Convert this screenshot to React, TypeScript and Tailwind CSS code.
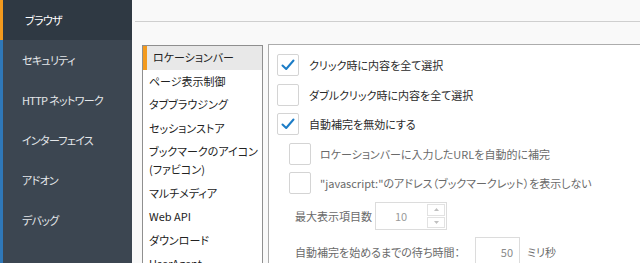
import React from 'react';

const jp = { fontFamily: '"Noto Sans CJK JP", "Noto Sans", sans-serif' };

const sideItems = ['ブラウザ', 'セキュリティ', 'HTTP ネットワーク', 'インターフェイス', 'アドオン', 'デバッグ'];

const listItems = [
  'ロケーションバー',
  'ページ表示制御',
  'タブブラウジング',
  'セッションストア',
  'ブックマークのアイコン\n(ファビコン)',
  'マルチメディア',
  'Web API',
  'ダウンロード',
  'UserAgent',
];

function Check({ checked }: { checked?: boolean }) {
  return (
    <div className="w-[22px] h-[22px] shrink-0 border border-[#d4d4d4] rounded-[2px] bg-white flex items-center justify-center">
      {checked && (
        <svg width="14" height="12" viewBox="0 0 14 12" fill="none">
          <path d="M1.5 6.5 L5.2 10 L12.5 1.5" stroke="#1c7cc6" strokeWidth="2" strokeLinecap="round" strokeLinejoin="round" />
        </svg>
      )}
    </div>
  );
}

export default function App() {
  return (
    <div
      className="flex w-[640px] h-[263px] overflow-hidden bg-[#f9f9f9] text-[11px] [font-feature-settings:'palt']"
      style={jp}
    >
      {/* Sidebar */}
      <div className="w-[132px] shrink-0 bg-[#3c4651] border-l-[3px] border-[#2f78b8] flex flex-col text-[11px] tracking-[-0.7px]">
        {sideItems.map((s, i) => (
          <div
            key={s}
            className={`h-10 flex items-center pl-[19px] shrink-0 whitespace-nowrap ${
              i === 0 ? 'bg-[#2f3943] text-white -ml-[3px] pl-[22px] border-l-[3px] border-[#f39a1e]' : 'text-[#e4e7ea]'
            }`}
          >
            {s}
          </div>
        ))}
      </div>

      {/* Main */}
      <div className="flex-1 flex flex-col min-w-0">
        <div className="h-[22px] shrink-0 ml-[3px] border-b border-[#cfcfcf]" />
        <div className="flex flex-1 pt-[22px] pl-[10px] gap-[5px] min-h-0">
          {/* List */}
          <div className="w-[121px] shrink-0 mt-[1px] bg-white border border-[#8f8f8f] border-b-0 text-[#222] overflow-hidden text-[11px]">
            {listItems.map((s, i) => (
              <div
                key={s}
                className={`py-[3px] pl-[6px] leading-[17.6px] whitespace-pre ${
                  i === 0 ? 'bg-[#e8e8e8] border-l-[4px] border-[#f39a1e] pl-[2px]' : ''
                }`}
              >
                {s}
              </div>
            ))}
          </div>

          {/* Settings panel */}
          <div className="flex-1 bg-white border border-[#acacac] border-r-0 border-b-0 pt-[9px] pl-[8px] text-[#2a2a2a] text-[11px]">
            <div className="flex flex-col">
              <div className="h-[30px] flex items-start gap-[10px]">
                <Check checked />
                <span className="leading-[22px]">クリック時に内容を全て選択</span>
              </div>
              <div className="h-[29px] flex items-start gap-[10px]">
                <Check />
                <span className="leading-[22px]">ダブルクリック時に内容を全て選択</span>
              </div>
              <div className="h-[30px] flex items-start gap-[10px]">
                <Check checked />
                <span className="leading-[22px]">自動補完を無効にする</span>
              </div>
              <div className="h-[29px] flex items-start gap-[9px] pl-[12px] text-[#6a6a6a]">
                <Check />
                <span className="leading-[22px] whitespace-nowrap">ロケーションバーに入力したURLを自動的に補完</span>
              </div>
              <div className="h-[27px] flex items-start gap-[9px] pl-[12px] text-[#6a6a6a]">
                <Check />
                <span className="leading-[22px] whitespace-nowrap">"javascript:"のアドレス（ブックマークレット）を表示しない</span>
              </div>
              <div className="h-[34px] flex items-center pl-[18px] text-[#6a6a6a]">
                <span className="w-[80px] whitespace-nowrap">最大表示項目数</span>
                <div className="w-[72px] h-[28px] border border-[#dcdcdc] flex">
                  <div className="flex-1 flex items-center justify-center text-[#9a9a9a]">10</div>
                  <div className="w-[20px] flex flex-col">
                    <div className="flex-1 border border-[#e2e2e2] m-[1px] mb-0 flex items-center justify-center">
                      <svg width="5" height="3" viewBox="0 0 5 3"><path d="M0 3 L2.5 0 L5 3Z" fill="#c0c0c0" /></svg>
                    </div>
                    <div className="flex-1 border border-[#e2e2e2] m-[1px] flex items-center justify-center">
                      <svg width="5" height="3" viewBox="0 0 5 3"><path d="M0 0 L2.5 3 L5 0Z" fill="#c0c0c0" /></svg>
                    </div>
                  </div>
                </div>
              </div>
              <div className="h-[34px] flex items-center pl-[18px] text-[#6a6a6a] pt-[4px]">
                <span className="w-[180px] whitespace-nowrap">自動補完を始めるまでの待ち時間：</span>
                <div className="w-[45px] h-[30px] border border-[#dcdcdc] flex items-center justify-end pr-[6px] text-[#8a8a8a]">50</div>
                <span className="ml-[7px]">ミリ秒</span>
              </div>
            </div>
          </div>
        </div>
      </div>
    </div>
  );
}
